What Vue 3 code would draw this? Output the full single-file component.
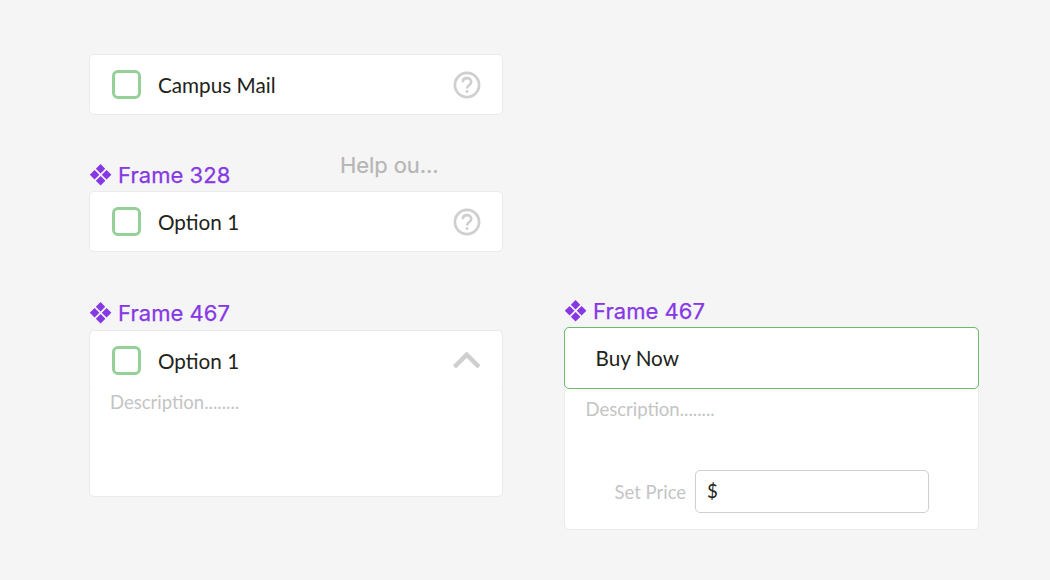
<script setup>
const petals = ['M11 0.2 L15.6 5 L11 9.8 L6.2 5 Z', 'M5 6.2 L9.8 11 L5 15.8 L0.2 11 Z', 'M17 6.2 L21.8 11 L17 15.8 L12.2 11 Z', 'M11 12.2 L15.8 17 L11 21.8 L6.2 17 Z']
const options = [
  { id: 'mail', frame: '', text: 'Campus Mail', icon: 'help', hint: '' },
  { id: 'closed', frame: 'Frame 328', text: 'Option 1', icon: 'help', hint: 'Help ou...' },
  { id: 'open', frame: 'Frame 467', text: 'Option 1', icon: 'chevron', hint: '', description: 'Description........' },
]
</script>

<template>
  <main class="canvas">
    <section class="column">
      <article v-for="o in options" :key="o.id" class="frame" :class="o.id">
        <header v-if="o.frame" class="frame-title">
          <svg class="component" viewBox="0.4 0.2 22 22"><path v-for="p in petals" :key="p" :d="p" /></svg>
          <span class="frame-name">{{ o.frame }}</span>
          <span v-if="o.hint" class="hint">{{ o.hint }}</span>
        </header>
        <div class="card">
          <div class="row">
            <span class="checkbox"></span>
            <span class="label">{{ o.text }}</span>
            <svg v-if="o.icon === 'help'" class="icon" viewBox="0 0 28 28">
              <circle cx="14" cy="14" r="12.1" />
              <path d="M9.8 11.2 C9.8 8.7 11.5 7.2 14 7.2 C16.5 7.2 18.2 8.8 18.2 11 C18.2 14 14 14 14 17.6" />
              <path class="dot" d="M12.7 19.2h2.6v2.6h-2.6z" />
            </svg>
            <svg v-else class="icon chevron" viewBox="0 0 28 28"><path d="M1.4 19.9 L13.7 7.6 L26 19.9" /></svg>
          </div>
          <p v-if="o.description" class="description">{{ o.description }}</p>
        </div>
      </article>
    </section>
    <section class="column second">
      <article class="frame">
        <header class="frame-title">
          <svg class="component" viewBox="0.4 0.2 22 22"><path v-for="p in petals" :key="p" :d="p" /></svg>
          <span class="frame-name">Frame 467</span>
        </header>
        <div class="card buy">
          <div class="row selected"><span class="label">Buy Now</span></div>
          <p class="description">Description........</p>
          <div class="price">
            <span class="price-label">Set Price</span>
            <span class="price-field">$</span>
          </div>
        </div>
      </article>
    </section>
  </main>
</template>

<style>
body { margin: 0; background: #f5f5f5; }
</style>

<style scoped>
.canvas { box-sizing: border-box; width: 1050px; height: 580px; padding: 0 71px 0 89px; display: flex; justify-content: space-between; align-items: flex-start; overflow: hidden; background: #f5f5f5; font-family: Lato, "Open Sans", sans-serif; color: #222319; }
.column { width: 414px; padding-top: 54px; }
.second { width: 415px; padding-top: 294px; }
.frame-title { display: flex; align-items: center; height: 33px; font: 22px/33px Inter, sans-serif; color: #8638e5; }
.component { width: 22px; height: 22px; margin: 0 6px 0 1px; fill: #8638e5; flex: none; overflow: visible; }
.frame-name { width: 222px; padding-top: 2px; letter-spacing: 0.05px; white-space: nowrap; -webkit-text-stroke: 0.25px #8638e5; }
.open .frame-name { padding-top: 0; }
.open .component { margin-top: -2px; }
.hint { color: #b5b5b5; margin-top: -19px; letter-spacing: -0.1px; white-space: nowrap; -webkit-text-stroke: 0.2px #b5b5b5; }
.closed { margin-top: 43px; }
.open { margin-top: 45px; }
.card { box-sizing: border-box; border: 1px solid #ebebeb; border-radius: 5px; background: #fff; }
.mail .card, .closed .card { height: 61px; }
.open .card { height: 167px; }
.row { display: flex; align-items: center; box-sizing: border-box; height: 59px; padding: 0 21px 0 22px; }
.open .row { margin: 0 -1px; border: solid #ebebeb; border-width: 0 1px 1px; border-bottom-color: transparent; border-radius: 5px; }
.open .label, .open .icon { padding-top: 1px; }
.open .icon { padding-top: 2px; }
.checkbox { box-sizing: border-box; width: 29px; height: 29px; border: 3px solid #94d097; border-radius: 6px; margin-right: 17px; }
.label { flex: 1; font-size: 20.7px; line-height: 30px; }
.icon { width: 28px; height: 28px; fill: none; stroke: #cfcfcf; stroke-width: 2.7; }
.icon .dot { fill: #cfcfcf; stroke: none; }
.icon.chevron { stroke-width: 4.4; }
.description { margin: -2px 0 0; padding-left: 20px; font-size: 18.5px; line-height: 28px; color: #c4c4c4; }
.buy { height: 203px; }
.selected { height: 62px; margin: -1px; padding-left: 30.5px; border: 1px solid #66bd6a; border-radius: 5px; }
.buy .description { margin-top: 7px; padding-left: 20.5px; }
.price { display: flex; align-items: center; margin-top: 47px; padding-left: 49.5px; }
.price-label { width: 80.5px; font-size: 18.5px; color: #c4c4c4; }
.price-field { box-sizing: border-box; width: 234px; height: 43px; padding-left: 11px; border: 1px solid #cfcfcf; border-radius: 5px; font-size: 18.7px; line-height: 41px; }
</style>
